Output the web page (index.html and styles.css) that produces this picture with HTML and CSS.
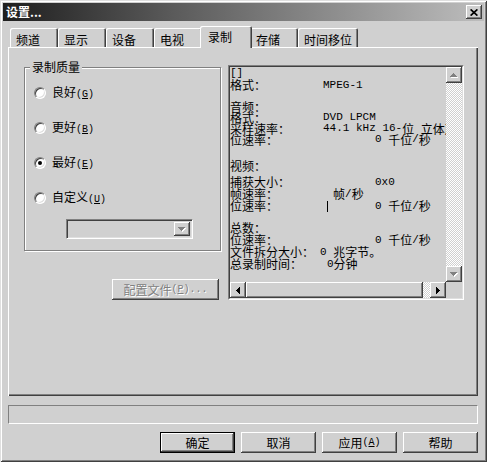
FILE: index.html
```html
<!DOCTYPE html>
<html lang="zh-CN">
<head>
<meta charset="utf-8">
<title>设置...</title>
<link rel="stylesheet" href="styles.css">
</head>
<body>
<div class="window">
  <div class="titlebar">
    <span class="title">设置...</span>
    <span class="close"><svg width="8" height="7" viewBox="0 0 8 7"><path d="M0.6 0.4l6.8 6.2M7.4 0.4l-6.8 6.2" stroke="#000" stroke-width="1.7" fill="none"/></svg></span>
  </div>
  <div class="client">
    <div class="tabs">
      <div class="tab">频道</div>
      <div class="tab">显示</div>
      <div class="tab">设备</div>
      <div class="tab">电视</div>
      <div class="tab sel">录制</div>
      <div class="tab">存储</div>
      <div class="tab wide">时间移位</div>
    </div>
    <div class="panel">
      <div class="left">
        <div class="group">
          <div class="group-title">录制质量</div>
          <div class="radios">
            <div class="radio"><span class="dot"></span><span>良好<span class="ak">(<u>G</u>)</span></span></div>
            <div class="radio"><span class="dot"></span><span>更好<span class="ak">(<u>B</u>)</span></span></div>
            <div class="radio"><span class="dot"><span class="pip"></span></span><span>最好<span class="ak">(<u>E</u>)</span></span></div>
            <div class="radio"><span class="dot"></span><span>自定义<span class="ak">(<u>U</u>)</span></span></div>
          </div>
          <div class="combo">
            <span class="combo-btn"><svg class="arr dis" width="8" height="5" viewBox="0 0 8 5"><path class="sh" d="M1 1h7v1H7v1H6v1H5v1H4V4H3V3H2V2H1z"/><path d="M0 0h7v1H6v1H5v1H4v1H3V3H2V2H1V1H0z"/></svg></span>
          </div>
        </div>
        <div class="btn profile disabled">配置文件<span class="ak">(<u>P</u>)...</span></div>
      </div>
      <div class="info">
        <div class="info-inner">
          <div class="info-text">
            <div class="sec">
              <div class="row"><span class="lat">[]</span></div>
              <div class="row"><span class="k w93">格式：</span><span class="lat">MPEG-1</span></div>
            </div>
            <div class="sec sec-b">
              <div class="row"><span class="k">音频：</span></div>
              <div class="row"><span class="k w93">格式：</span><span class="lat">DVD LPCM</span></div>
              <div class="row"><span class="k w93">采样速率：</span><span class="lat">44.1 kHz 16-</span><span class="cj">位</span><span class="lat"> </span><span class="cj">立体声</span></div>
              <div class="row"><span class="k w145">位速率：</span><span class="lat">0 </span><span class="cj">千位</span><span class="lat">/</span><span class="cj">秒</span></div>
            </div>
            <div class="sec sec-c">
              <div class="row"><span class="k">视频：</span></div>
            </div>
            <div class="sec sec-c2">
              <div class="row"><span class="k w145">捕获大小：</span><span class="lat">0x0</span></div>
              <div class="row"><span class="k w103">帧速率：</span><span class="cj">帧</span><span class="lat">/</span><span class="cj">秒</span></div>
              <div class="row"><span class="k w97">位速率：</span><span class="caret"></span><span class="gap47"></span><span class="lat">0 </span><span class="cj">千位</span><span class="lat">/</span><span class="cj">秒</span></div>
            </div>
            <div class="sec sec-d">
              <div class="row"><span class="k">总数：</span></div>
              <div class="row"><span class="k w145">位速率：</span><span class="lat">0 </span><span class="cj">千位</span><span class="lat">/</span><span class="cj">秒</span></div>
              <div class="row"><span class="k w90">文件拆分大小：</span><span class="lat">0 </span><span class="cj">兆字节。</span></div>
              <div class="row"><span class="k w97">总录制时间：</span><span class="lat">0</span><span class="cj">分钟</span></div>
            </div>
          </div>
          <div class="vscroll">
            <span class="sb-btn"><svg class="arr dis" width="8" height="5" viewBox="0 0 8 5"><path class="sh" d="M4 1h1v1h1v1h1v1h1v1H1V4h1V3h1V2h1z"/><path d="M3 0h1v1h1v1h1v1h1v1H0V3h1V2h1V1h1z"/></svg></span>
            <span class="track"></span>
            <span class="sb-btn"><svg class="arr dis" width="8" height="5" viewBox="0 0 8 5"><path class="sh" d="M1 1h7v1H7v1H6v1H5v1H4V4H3V3H2V2H1z"/><path d="M0 0h7v1H6v1H5v1H4v1H3V3H2V2H1V1H0z"/></svg></span>
          </div>
          <div class="hscroll">
            <span class="sb-btn"><svg class="arr" width="4" height="7" viewBox="0 0 4 7"><path d="M4 0h-1v1h-1v1h-1v1H0v1h1v1h1v1h1v1h1z"/></svg></span>
            <span class="thumb"></span>
            <span class="track"></span>
            <span class="sb-btn"><svg class="arr" width="4" height="7" viewBox="0 0 4 7"><path d="M0 0h1v1h1v1h1v1h1v1h-1v1h-1v1h-1v1H0z"/></svg></span>
          </div>
          <div class="corner"></div>
        </div>
      </div>
    </div>
    <div class="status"></div>
    <div class="buttons">
      <div class="btn default">确定</div>
      <div class="btn">取消</div>
      <div class="btn">应用<span class="ak">(<u>A</u>)</span></div>
      <div class="btn">帮助</div>
    </div>
  </div>
</div>
</body>
</html>
```
FILE: styles.css
```css
* { box-sizing: border-box; }
html, body { margin: 0; padding: 0; }
body {
  width: 487px;
  height: 462px;
  overflow: hidden;
  background: #d0d0d0;
  color: #000;
  font-family: "Noto Sans CJK SC", "Liberation Sans", sans-serif;
  font-size: 12px;
  line-height: 14px;
}
u { text-decoration: underline; text-underline-offset: 1px; }
.ak { font-family: "Liberation Mono", monospace; font-size: 10px; }

.window {
  width: 487px;
  height: 462px;
  padding: 3px;
  background: #d0d0d0;
  display: flex;
  flex-direction: column;
  box-shadow: inset 1px 1px #dfdfdf, inset -1px -1px #404040, inset 2px 2px #fff, inset -2px -2px #808080;
}

.titlebar {
  flex: none;
  height: 18px;
  display: flex;
  align-items: center;
  justify-content: space-between;
  padding: 0 2px 0 3px;
  background: linear-gradient(90deg, #1e1e1e 0%, #5a5a5a 35%, #bdbdbd 100%);
}
.title { color: #fff; font-weight: bold; font-size: 12px; line-height: 14px; }
.close {
  width: 16px;
  height: 14px;
  display: flex;
  align-items: center;
  justify-content: center;
  background: #d0d0d0;
  box-shadow: inset -1px -1px #404040, inset 1px 1px #fff, inset -2px -2px #808080;
}

.client {
  flex: 1;
  display: flex;
  flex-direction: column;
  padding: 5px 6px 0 5px;
}

.tabs {
  display: flex;
  align-items: flex-start;
  height: 21px;
  padding-left: 2px;
}
.tab {
  width: 48px;
  height: 19px;
  margin-top: 2px;
  padding: 5px 0 0 6px;
  line-height: 14px;
  background: #d0d0d0;
  border-top-left-radius: 2px;
  border-top-right-radius: 2px;
  box-shadow: inset 1px 1px #fff, inset -1px 0 #404040, inset -2px 0 #808080;
}
.tab.wide { width: 60px; }
.tab.sel {
  position: relative;
  z-index: 2;
  width: 52px;
  height: 22px;
  margin: 0 -2px;
  padding: 4px 0 0 8px;
}

.panel {
  height: 349px;
  display: flex;
  align-items: flex-start;
  gap: 6px;
  padding: 13px 0 0 16px;
  background: #d0d0d0;
  box-shadow: inset 1px 1px #fff, inset -1px -1px #404040, inset -2px -2px #808080;
}

.left {
  width: 198px;
  display: flex;
  flex-direction: column;
}
.group {
  margin: 7px 1px 0 0;
  padding: 0 8px 11px 9px;
  border: 1px solid #808080;
  box-shadow: inset 1px 1px #fff, 1px 1px #fff;
}
.group-title {
  width: max-content;
  margin: -8px 0 0 -4px;
  padding: 0 2px;
  background: #d0d0d0;
  line-height: 14px;
}
.radios {
  margin-top: 12px;
  display: flex;
  flex-direction: column;
  gap: 21px;
}
.radio {
  height: 14px;
  display: flex;
  align-items: center;
  gap: 6px;
}
.dot {
  flex: none;
  width: 12px;
  height: 12px;
  border-radius: 50%;
  border: 1px solid;
  border-color: #808080 #fff #fff #808080;
  background: #fff;
  box-shadow: inset 1px 1px #404040, inset -1px -1px #dfdfdf;
  display: flex;
  align-items: center;
  justify-content: center;
}
.pip { width: 4px; height: 4px; border-radius: 50%; background: #000; }

.combo {
  width: 127px;
  height: 20px;
  margin: 14px 0 0 32px;
  padding: 2px;
  display: flex;
  justify-content: flex-end;
  border: 1px solid;
  border-color: #808080 #fff #fff #808080;
  box-shadow: inset 1px 1px #404040, inset -1px -1px #dfdfdf;
}
.combo-btn {
  width: 16px;
  height: 14px;
  display: flex;
  align-items: center;
  justify-content: center;
  background: #d0d0d0;
  box-shadow: inset -1px -1px #404040, inset 1px 1px #fff, inset -2px -2px #808080;
}

.arr path { fill: #000; }
.arr.dis path { fill: #808080; }
.arr.dis path.sh { fill: #fff; }

.btn {
  width: 75px;
  height: 21px;
  display: flex;
  align-items: center;
  justify-content: center;
  background: #d0d0d0;
  line-height: 14px;
  box-shadow: inset -1px -1px #404040, inset 1px 1px #fff, inset -2px -2px #808080;
}
.btn.default {
  box-shadow: inset 0 0 0 1px #000, inset -2px -2px #404040, inset 2px 2px #fff, inset -3px -3px #808080;
}
.btn.disabled { color: #808080; text-shadow: 1px 1px #fff; }
.btn.profile { width: 107px; margin: 28px 3px 0 auto; }

.info {
  width: 236px;
  height: 235px;
  margin-top: 5px;
  border: 1px solid;
  border-color: #808080 #fff #fff #808080;
}
.info-inner {
  height: 100%;
  display: grid;
  grid-template-columns: 1fr 16px;
  grid-template-rows: 1fr 16px;
  border: 1px solid;
  border-color: #404040 #dfdfdf #dfdfdf #404040;
  background: #d0d0d0;
}
.info-text {
  overflow: hidden;
  white-space: nowrap;
}
.sec .row { height: 12px; line-height: 12px; display: flex; align-items: center; }
.sec-b { margin-top: 10px; }
.sec-b .row { height: 11px; line-height: 11px; }
.sec-c { margin-top: 15px; }
.sec-c2 { margin-top: 4px; }
.sec-d { margin-top: 10px; }
.k { flex: none; font-size: 12px; }
.w90 { width: 90px; }
.w93 { width: 93px; }
.w97 { width: 97px; }
.w103 { width: 103px; }
.w145 { width: 145px; }
.lat { font-family: "Liberation Mono", monospace; font-size: 11px; white-space: pre; }
.cj { font-size: 12px; }
.caret { flex: none; width: 1px; height: 11px; background: #000; }
.gap47 { flex: none; width: 47px; }

.vscroll { display: flex; flex-direction: column; }
.hscroll { display: flex; }
.sb-btn {
  flex: none;
  width: 16px;
  height: 16px;
  display: flex;
  align-items: center;
  justify-content: center;
  background: #d0d0d0;
  box-shadow: inset -1px -1px #404040, inset 1px 1px #fff, inset -2px -2px #808080;
}
.track {
  flex: 1;
  background-image: repeating-conic-gradient(#fff 0 25%, #d0d0d0 0 50%);
  background-size: 2px 2px;
}
.thumb {
  flex: none;
  width: 177px;
  background: #d0d0d0;
  box-shadow: inset -1px -1px #404040, inset 1px 1px #fff, inset -2px -2px #808080;
}
.corner { background: #d0d0d0; }

.status {
  height: 19px;
  margin-top: 9px;
  border: 1px solid;
  border-color: #808080 #fff #fff #808080;
}
.buttons {
  display: flex;
  justify-content: flex-end;
  gap: 6px;
  margin-top: 8px;
}
```
